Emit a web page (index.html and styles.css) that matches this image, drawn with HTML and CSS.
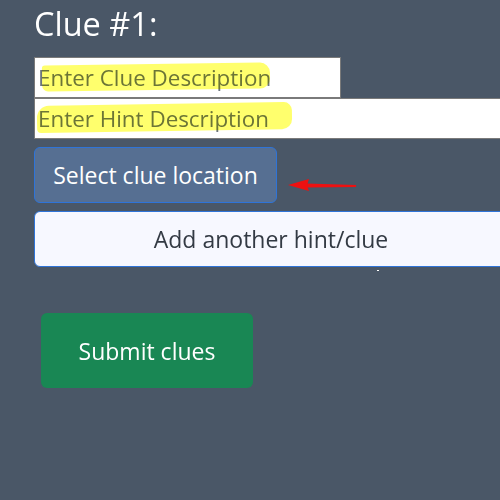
FILE: index.html
```html
<!DOCTYPE html>
<html>
<head>
<meta charset="utf-8">
<link rel="stylesheet" href="styles.css">
</head>
<body>
<div class="page">
  <h1 class="title">Clue #1:</h1>
  <div class="field field-short">
    <input class="input" type="text" placeholder="Enter Clue Description">
    <span class="mark mark-1"></span>
  </div>
  <div class="field field-wide">
    <input class="input" type="text" placeholder="Enter Hint Description">
    <span class="mark mark-2"></span>
  </div>
  <div class="select-row">
    <button class="btn btn-select">Select clue location</button>
    <svg class="arrow" width="72" height="16" viewBox="0 0 72 16">
      <path d="M18 6.5 L68 8 L68 10 L18 10.5 Z" fill="#ee1111"/>
      <path d="M0 8 L21 2 L19 8.5 L21 14 Z" fill="#ee1111"/>
    </svg>
  </div>
  <button class="btn btn-add">Add another hint/clue</button>
  <span class="dot"></span>
  <button class="btn btn-submit">Submit clues</button>
</div>
</body>
</html>
```
FILE: styles.css
```css
html, body {
  margin: 0;
  padding: 0;
  background: #4a5767;
  width: 500px;
  height: 500px;
  overflow: hidden;
}
.page {
  position: relative;
  padding: 0 0 0 34px;
  font-family: "Open Sans", "Noto Sans", sans-serif;
}
.title {
  margin: 0;
  padding-top: 2px;
  height: 55px;
  font-size: 32.5px;
  font-weight: 400;
  line-height: 44px;
  color: #ffffff;
}
.field {
  position: relative;
  height: 41px;
}
.field-short { width: 307px; }
.field-wide { width: 480px; }
.input {
  box-sizing: border-box;
  width: 100%;
  height: 41px;
  margin: 0;
  border: 1px solid #7a7a7a;
  background: #ffffff;
  padding: 0 3px;
  font-family: "Open Sans", "Noto Sans", sans-serif;
  font-size: 22.4px;
  color: #222;
  outline: none;
}
.input::placeholder { color: #6c757d; }
.mark {
  position: absolute;
  background: rgba(255, 255, 60, 0.75);
  mix-blend-mode: multiply;
  pointer-events: none;
}
.mark-1 {
  left: 8px; top: 7px; width: 228px; height: 26px;
  border-radius: 3px 10px 10px 6px;
  transform: rotate(-0.8deg);
}
.mark-2 {
  left: 3px; top: 6px; width: 255px; height: 27px;
  border-radius: 12px 8px 10px 4px;
  transform: rotate(-0.9deg);
}
.select-row {
  position: relative;
  margin-top: 8px;
  height: 56px;
}
.btn {
  box-sizing: border-box;
  font-family: "Open Sans", "Noto Sans", sans-serif;
  font-size: 23px;
  cursor: pointer;
  margin: 0;
}
.btn-select {
  width: 243px;
  height: 56px;
  background: #566f92;
  color: #ffffff;
  border: 1px solid #2f74d8;
  border-radius: 6px;
}
.arrow {
  position: absolute;
  left: 254px;
  top: 30px;
}
.btn-add {
  display: block;
  margin-top: 8px;
  width: 474px;
  height: 56px;
  background: #f7f8ff;
  color: #333a44;
  border: 1px solid #2f74d8;
  border-radius: 6px;
}
.dot {
  position: absolute;
  left: 377px;
  top: 270px;
  width: 2px;
  height: 1px;
  background: #ffffff;
}
.btn-submit {
  display: block;
  margin: 46px 0 0 7px;
  width: 212px;
  height: 75px;
  background: #198754;
  color: #ffffff;
  border: none;
  border-radius: 6px;
}
```
